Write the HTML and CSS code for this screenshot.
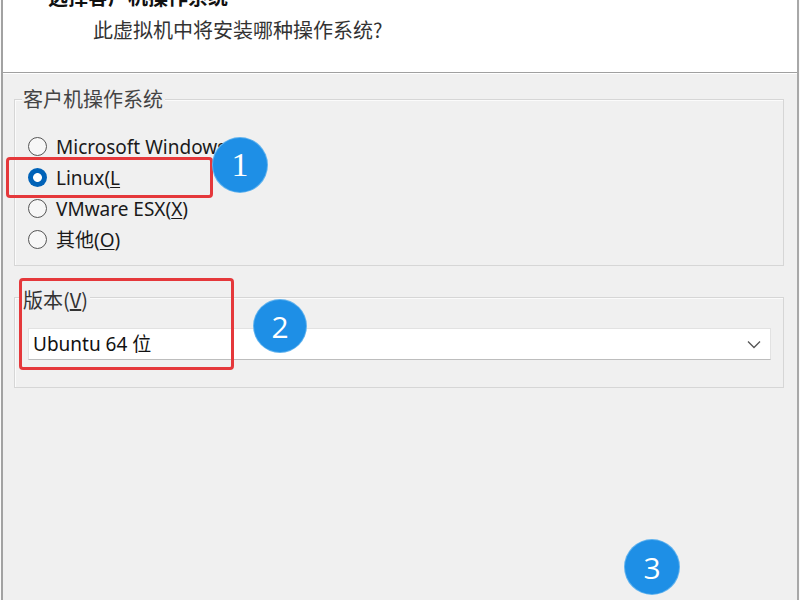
FILE: index.html
```html
<!DOCTYPE html>
<html lang="zh-CN">
<head>
<meta charset="utf-8">
<title>新建虚拟机向导</title>
<link rel="stylesheet" href="styles.css">
</head>
<body>
<div class="window">
  <header class="header">
    <div class="title">选择客户机操作系统</div>
    <div class="subtitle">此虚拟机中将安装哪种操作系统?</div>
  </header>
  <main class="content">
    <section class="group group-os">
      <div class="group-label">客户机操作系统</div>
      <div class="radios">
        <div class="radio-row"><span class="radio"></span><span class="rtext">Microsoft Windows(<u>W</u>)</span></div>
        <div class="radio-row"><span class="radio checked"></span><span class="rtext">Linux(<u>L</u></span></div>
        <div class="radio-row"><span class="radio"></span><span class="rtext">VMware ESX(<u>X</u>)</span></div>
        <div class="radio-row"><span class="radio"></span><span class="rtext">其他(<u>O</u>)</span></div>
      </div>
    </section>
    <section class="group group-ver">
      <div class="group-label">版本(<u>V</u>)</div>
      <div class="select">
        <span class="select-text">Ubuntu 64 位</span>
        <svg class="chev" width="14" height="9" viewBox="0 0 14 9"><path d="M1 1.5 L7 7.5 L13 1.5" fill="none" stroke="#555" stroke-width="1.3"/></svg>
      </div>
    </section>
  </main>
</div>
<div class="mark rect1"></div>
<div class="mark rect2"></div>
<div class="badge b1">1</div>
<div class="badge b2">2</div>
<div class="badge b3">3</div>
</body>
</html>
```
FILE: styles.css
```css
html, body {
  margin: 0;
  padding: 0;
}
body {
  width: 800px;
  height: 600px;
  overflow: hidden;
  background: #fafafa;
  position: relative;
  font-family: "Noto Sans", "Noto Sans CJK SC", sans-serif;
  color: #222;
}
.window {
  margin-left: 1px;
  width: 794px;
  height: 600px;
  border-left: 2px solid #a2a2a2;
  border-right: 2px solid #a8a8a8;
  background: #f0f0f0;
  overflow: hidden;
}
.header {
  display: flow-root;
  height: 72px;
  background: #ffffff;
  border-bottom: 1px solid #a0a0a0;
  box-sizing: content-box;
}
.title {
  font-family: "Noto Sans CJK SC", sans-serif;
  font-weight: bold;
  font-size: 20px;
  line-height: 24px;
  margin-top: -15px;
  padding-left: 45px;
  color: #111;
}
.subtitle {
  font-family: "Noto Sans CJK SC", sans-serif;
  font-size: 20px;
  line-height: 24px;
  margin-top: 9px;
  padding-left: 90px;
  color: #333;
}
.content {
  display: flow-root;
  padding: 0 13px 0 11px;
  border-top: 1px solid #fff;
}
.group {
  border: 1px solid #d6d6d6;
  box-shadow: inset 1px 1px 0 #fbfbfb;
}
.group-os {
  margin-top: 25px;
  padding-bottom: 10px;
}
.group-ver {
  margin-top: 31px;
  padding-bottom: 27px;
}
.group-label {
  width: fit-content;
  background: #f0f0f0;
  font-family: "Noto Sans CJK SC", sans-serif;
  font-size: 20px;
  line-height: 22px;
  color: #444;
  margin-left: 7px;
  padding: 0 2px 0 1px;
}
.group-os .group-label {
  margin-top: -12px;
}
.group-ver .group-label {
  margin-top: -9px;
  margin-left: 7px;
  color: #333;
}
.radios {
  margin-top: 21px;
}
.radio-row {
  height: 31px;
  display: flex;
  align-items: center;
  padding-left: 13px;
}
.radio {
  width: 17px;
  height: 17px;
  border: 1px solid #555;
  border-radius: 50%;
  box-sizing: content-box;
  background: #f7f7f7;
  flex: none;
}
.radio.checked {
  width: 19px;
  height: 19px;
  border: none;
  background: radial-gradient(circle, #ffffff 0 4px, #0062b8 4.8px);
}
.rtext {
  margin-left: 9px;
  font-size: 19px;
  line-height: 22px;
  color: #1a1a1a;
  font-family: "Noto Sans", "Noto Sans CJK SC", sans-serif;
}
.rtext u {
  text-underline-offset: 2px;
}
.select {
  margin: 17px 12px 0 13px;
  height: 32px;
  box-sizing: border-box;
  background: #ffffff;
  border: 1px solid #e2e2e2;
  border-bottom: 1px solid #bdbdbd;
  display: flex;
  align-items: center;
  justify-content: space-between;
  padding: 0 9px 0 4px;
}
.select-text {
  font-family: "Noto Sans", "Noto Sans CJK SC", sans-serif;
  font-size: 19px;
  color: #111;
  line-height: 22px;
}
.mark {
  position: absolute;
  border: 3px solid #e5383b;
  border-radius: 4px;
  box-sizing: border-box;
}
.rect1 {
  left: 6px;
  top: 157px;
  width: 207px;
  height: 41px;
}
.rect2 {
  left: 19px;
  top: 278px;
  width: 215px;
  height: 92px;
}
.badge {
  position: absolute;
  width: 54px;
  height: 54px;
  border-radius: 50%;
  background: #1e8fe6;
  box-shadow: 0 0 0 1px #5fb2ee;
  color: #ffffff;
  display: flex;
  align-items: center;
  justify-content: center;
  font-size: 30px;
  font-family: "Open Sans", sans-serif;
}
.b1 {
  left: 213px;
  top: 138px;
  font-family: "Liberation Serif", serif;
  font-size: 34px;
}
.b2 {
  left: 254px;
  top: 300px;
  width: 52px;
  height: 52px;
}
.b3 {
  left: 625px;
  top: 540px;
}
```
